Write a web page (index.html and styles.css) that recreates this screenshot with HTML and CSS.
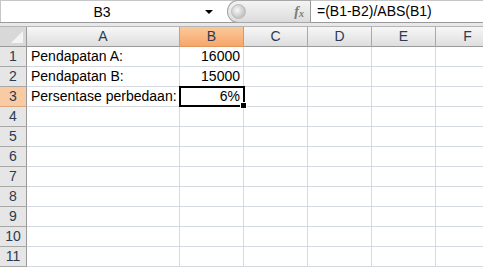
FILE: index.html
```html
<!DOCTYPE html>
<html lang="id">
<head>
	<meta charset="UTF-8">
	<title>Persentase perbedaan</title>
	<link rel="stylesheet" href="styles.css">
</head>
<body>
	<div class="formula-bar">
		<div class="name-box">
			<span class="cell-ref">B3</span>
			<span class="drop"></span>
		</div>
		<div class="fx-pill">
			<span class="knob"></span>
			<span class="fx"><i>f</i><sub>x</sub></span>
		</div>
		<div class="formula">=(B1-B2)/ABS(B1)</div>
	</div>
	<div class="strip"></div>

	<div class="sheet">
		<div class="corner"></div>
		<div class="col-head">A</div>
		<div class="col-head active">B</div>
		<div class="col-head">C</div>
		<div class="col-head">D</div>
		<div class="col-head">E</div>
		<div class="col-head">F</div>

		<div class="row-head">1</div>
		<div class="cell">Pendapatan A:</div>
		<div class="cell num">16000</div>
		<div class="cell"></div><div class="cell"></div><div class="cell"></div><div class="cell"></div>

		<div class="row-head">2</div>
		<div class="cell">Pendapatan B:</div>
		<div class="cell num">15000</div>
		<div class="cell"></div><div class="cell"></div><div class="cell"></div><div class="cell"></div>

		<div class="row-head active">3</div>
		<div class="cell">Persentase perbedaan:</div>
		<div class="cell num selected">6%</div>
		<div class="cell"></div><div class="cell"></div><div class="cell"></div><div class="cell"></div>

		<div class="row-head">4</div>
		<div class="cell"></div><div class="cell"></div><div class="cell"></div><div class="cell"></div><div class="cell"></div><div class="cell"></div>
		<div class="row-head">5</div>
		<div class="cell"></div><div class="cell"></div><div class="cell"></div><div class="cell"></div><div class="cell"></div><div class="cell"></div>
		<div class="row-head">6</div>
		<div class="cell"></div><div class="cell"></div><div class="cell"></div><div class="cell"></div><div class="cell"></div><div class="cell"></div>
		<div class="row-head">7</div>
		<div class="cell"></div><div class="cell"></div><div class="cell"></div><div class="cell"></div><div class="cell"></div><div class="cell"></div>
		<div class="row-head">8</div>
		<div class="cell"></div><div class="cell"></div><div class="cell"></div><div class="cell"></div><div class="cell"></div><div class="cell"></div>
		<div class="row-head">9</div>
		<div class="cell"></div><div class="cell"></div><div class="cell"></div><div class="cell"></div><div class="cell"></div><div class="cell"></div>
		<div class="row-head">10</div>
		<div class="cell"></div><div class="cell"></div><div class="cell"></div><div class="cell"></div><div class="cell"></div><div class="cell"></div>
		<div class="row-head">11</div>
		<div class="cell"></div><div class="cell"></div><div class="cell"></div><div class="cell"></div><div class="cell"></div><div class="cell"></div>
	</div>
</body>
</html>
```

FILE: styles.css
```css
* {
	margin: 0;
	padding: 0;
	box-sizing: border-box;
}

body {
	width: 483px;
	height: 268px;
	overflow: hidden;
	background: #fff;
	font-family: "Liberation Sans", Arial, sans-serif;
	font-size: 14px;
	color: #000;
}

.formula-bar {
	display: flex;
	height: 23px;
	border-top: 1px solid #c6c6c6;
	border-bottom: 1px solid #9a9a9a;
	background: #fff;
}

.name-box {
	width: 227px;
	display: flex;
	align-items: center;
	border-left: 1px solid #c6c6c6;
}

.cell-ref {
	flex: 1;
	text-align: center;
	font-size: 14px;
	padding-left: 4px;
}

.drop {
	width: 0;
	height: 0;
	margin: 1px 14px 0 6px;
	border-left: 4px solid transparent;
	border-right: 4px solid transparent;
	border-top: 4px solid #000;
}

.fx-pill {
	width: 84px;
	display: flex;
	align-items: center;
	justify-content: space-between;
	padding: 0 6px 0 3px;
	border-radius: 11px 0 0 11px;
	border: 1px solid #a7a7a7;
	border-right: 1px solid #9a9a9a;
	background: linear-gradient(#f4f4f4, #dcdcdc);
	margin-top: -1px;
	height: 23px;
}

.knob {
	width: 15px;
	height: 15px;
	border-radius: 50%;
	background: radial-gradient(circle at 40% 40%, #f8f8f8, #c2c2c2 70%);
	border: 1px solid #bdbdbd;
}

.fx {
	font-family: "Liberation Serif", serif;
	font-size: 14px;
	color: #7a7a7a;
	font-weight: bold;
}

.fx sub {
	font-size: 10px;
	font-style: italic;
	vertical-align: -1px;
}

.formula {
	flex: 1;
	padding-left: 6px;
	line-height: 21px;
	font-size: 14px;
}

.strip {
	height: 4px;
	background: #e8e8e8;
	border-bottom: 1px solid #b5b5b5;
}

.sheet {
	display: grid;
	grid-template-columns: 27px 153px 64px 64px 64px 64px 64px;
	grid-auto-rows: 20px;
}

.corner {
	background: #d8d8d8;
	border-right: 1px solid #9a9a9a;
	border-bottom: 1px solid #9a9a9a;
	position: relative;
}

.corner::after {
	content: "";
	position: absolute;
	right: 3px;
	bottom: 3px;
	border-left: 12px solid transparent;
	border-bottom: 12px solid #f4f4f4;
}

.col-head {
	background: linear-gradient(#f7f7f7, #dedede);
	border-right: 1px solid #a8a8a8;
	border-bottom: 1px solid #9a9a9a;
	text-align: center;
	line-height: 19px;
	color: #2a3b52;
	font-size: 14px;
}

.col-head.active {
	background: linear-gradient(#fbc99a, #f7a66b);
	border-right-color: #e0955a;
	border-bottom-color: #e0955a;
}

.row-head {
	background: #e6e6e6;
	border-right: 1px solid #9a9a9a;
	border-bottom: 1px solid #a8a8a8;
	text-align: center;
	line-height: 19px;
	color: #2a3b52;
	font-size: 14px;
}

.row-head.active {
	background: #f8cba4;
	border-bottom-color: #e0a67a;
}

.cell {
	border-right: 1px solid #d5d9e2;
	border-bottom: 1px solid #d5d9e2;
	line-height: 19px;
	padding: 0 3px 0 4px;
	white-space: nowrap;
}

.cell.num {
	text-align: right;
}

.cell.selected {
	position: relative;
}

.cell.selected::before {
	content: "";
	position: absolute;
	left: -1px;
	top: -1px;
	right: -2px;
	bottom: -1px;
	border: 2px solid #000;
}

.cell.selected::after {
	content: "";
	position: absolute;
	right: -4px;
	bottom: -3px;
	width: 5px;
	height: 5px;
	background: #000;
	border: 1px solid #fff;
}
```
